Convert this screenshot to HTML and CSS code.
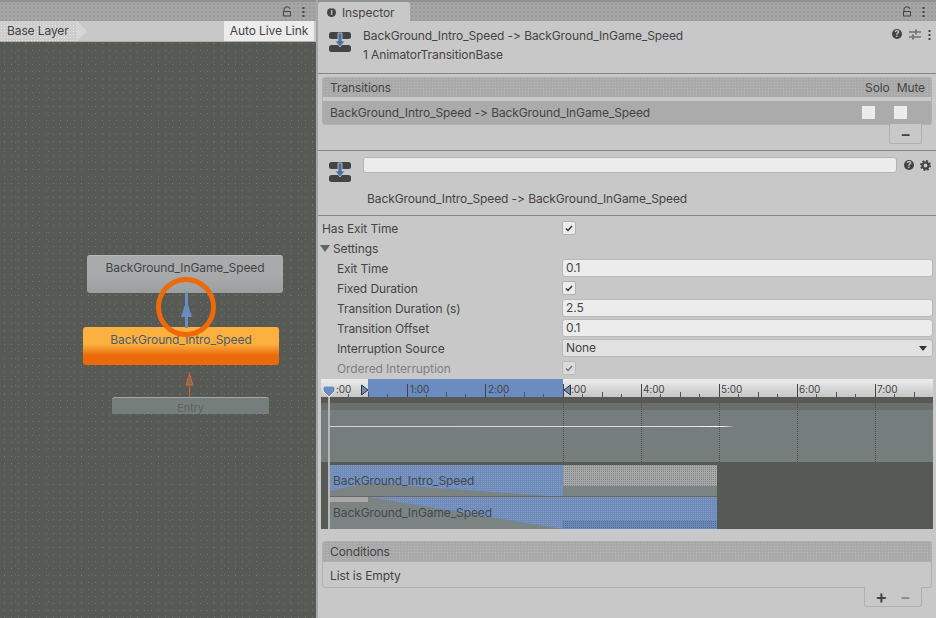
FILE: index.html
```html
<html>
  <head>
    <link rel="stylesheet" href="styles.css">
  </head>
  <body>
    <div class="graph-pane">
      <div class="tabstrip dotted">
        <svg class="lock" width="10" height="11" viewBox="0 0 10 11"><path d="M2 5V3a3 2.2 0 0 1 6 0M1.500 5.500h7v4.500h-7z" fill="none" stroke="#444" stroke-width="1"/></svg>
        <svg class="kebab" width="3" height="11" viewBox="0 0 3 11"><path d="M0.500 1h2v2h-2zM0.500 5h2v2h-2zM0.500 9h2v2h-2z" fill="#444"/></svg>
      </div>
      <div class="crumbs">
        <div class="crumb">Base Layer</div>
        <div class="crumb-tip"></div>
        <div class="crumb-fill"></div>
        <div class="live-link">Auto Live Link</div>
      </div>
      <div class="graph">
        <div class="node node-ingame">BackGround_InGame_Speed</div>
        <div class="node node-intro">BackGround_Intro_Speed</div>
        <div class="node node-entry">Entry</div>
        <svg class="graph-marks" width="316" height="577" viewBox="0 0 316 577">
          <path d="M186.500 250V286" stroke="#6a8cc0" stroke-width="3"/>
          <path d="M186.500 258L192 275H181Z" fill="#6a8cc0"/>
          <circle cx="186" cy="265" r="27.500" fill="none" stroke="#ec6a0a" stroke-width="5"/>
          <path d="M189.500 355V330" stroke="#e0622a"/>
          <path d="M189.500 332L193 343H186Z" fill="#8a6a58" stroke="#e0622a"/>
        </svg>
      </div>
    </div>

    <div class="inspector">
      <div class="tabstrip dotted">
        <div class="tab"><span class="info-icon">i</span>Inspector</div>
        <svg class="lock" width="10" height="11" viewBox="0 0 10 11"><path d="M2 5V3a3 2.2 0 0 1 6 0M1.500 5.500h7v4.500h-7z" fill="none" stroke="#444" stroke-width="1"/></svg>
        <svg class="kebab" width="3" height="11" viewBox="0 0 3 11"><path d="M0.500 1h2v2h-2zM0.500 5h2v2h-2zM0.500 9h2v2h-2z" fill="#444"/></svg>
      </div>

      <div class="asset-head">
        <svg class="transition-icon" width="22" height="22" viewBox="0 0 22 22">
          <rect x="0" y="1" width="22" height="7" rx="2.500" fill="#444"/>
          <rect x="0" y="14" width="22" height="7" rx="2.500" fill="#444"/>
          <path d="M9 2h4v8h3L11 16L6 10h3z" fill="#4d6f9f" stroke="#c8c8c8" stroke-width="0.800"/>
        </svg>
        <div class="asset-text">
          <div>BackGround_Intro_Speed -&gt; BackGround_InGame_Speed</div>
          <div>1 AnimatorTransitionBase</div>
        </div>
        <div class="head-icons">
          <span class="help-icon">?</span>
          <svg width="12" height="11" viewBox="0 0 12 11"><path d="M0 3h6M8 3h4M0 8h3M5 8h7M7 0.500v5M4 5.500v5" stroke="#444" stroke-width="1.200" fill="none"/></svg>
          <svg width="3" height="11" viewBox="0 0 3 11"><path d="M0.500 1h2v2h-2zM0.500 5h2v2h-2zM0.500 9h2v2h-2z" fill="#444"/></svg>
        </div>
      </div>

      <div class="list-box transitions">
        <div class="list-head dotted-dark">
          <span>Transitions</span>
          <span class="solo">Solo</span>
          <span>Mute</span>
        </div>
        <div class="list-row">
          <span>BackGround_Intro_Speed -&gt; BackGround_InGame_Speed</span>
          <i class="flag first"></i>
          <i class="flag"></i>
        </div>
      </div>
      <div class="list-foot-wrap">
        <div class="list-foot single"><span class="foot-btn">−</span></div>
      </div>

      <div class="transition-head">
        <svg class="transition-icon lower" width="22" height="22" viewBox="0 0 22 22">
          <rect x="0" y="1" width="22" height="7" rx="2.500" fill="#444"/>
          <rect x="0" y="14" width="22" height="7" rx="2.500" fill="#444"/>
          <path d="M9 2h4v8h3L11 16L6 10h3z" fill="#4d6f9f" stroke="#c8c8c8" stroke-width="0.800"/>
        </svg>
        <div class="transition-main">
          <div class="name-line">
            <div class="name-input"></div>
            <span class="help-icon">?</span>
            <svg width="11" height="11" viewBox="0 0 12 12"><circle cx="6" cy="6" r="3.300" fill="none" stroke="#444" stroke-width="2.400"/><circle cx="6" cy="6" r="5" fill="none" stroke="#444" stroke-width="2" stroke-dasharray="2 1.930"/></svg>
          </div>
          <div class="transition-name">BackGround_Intro_Speed -&gt; BackGround_InGame_Speed</div>
        </div>
      </div>

      <div class="props">
        <div class="prop"><label>Has Exit Time</label><div class="check"><svg width="8" height="7" viewBox="0 0 8 7"><path d="M1 3.500L3 5.500L7 1" fill="none" stroke="#333" stroke-width="1.500"/></svg></div></div>
        <div class="prop foldout"><label><span class="arrow"></span>Settings</label></div>
        <div class="prop nested"><label>Exit Time</label><div class="field">0.1</div></div>
        <div class="prop nested"><label>Fixed Duration</label><div class="check"><svg width="8" height="7" viewBox="0 0 8 7"><path d="M1 3.500L3 5.500L7 1" fill="none" stroke="#333" stroke-width="1.500"/></svg></div></div>
        <div class="prop nested"><label>Transition Duration (s)</label><div class="field">2.5</div></div>
        <div class="prop nested"><label>Transition Offset</label><div class="field">0.1</div></div>
        <div class="prop nested"><label>Interruption Source</label><div class="field select">None<span class="caret"></span></div></div>
        <div class="prop nested disabled"><label>Ordered Interruption</label><div class="check"><svg width="8" height="7" viewBox="0 0 8 7"><path d="M1 3.500L3 5.500L7 1" fill="none" stroke="#333" stroke-width="1.500"/></svg></div></div>
      </div>

      <div class="timeline">
        <div class="ruler">
          <div class="ruler-blue"></div>
          <svg class="ticks" width="612" height="18" viewBox="0 0 612 18">
            <path d="M86.500 5V18M164.500 5V18M242.500 5V18M320.500 5V18M398.500 5V18M476.500 5V18M554.500 5V18" stroke="#444"/>
            <path d="M47.500 13V18M125.500 13V18M203.500 13V18M281.500 13V18M359.500 13V18M437.500 13V18M515.500 13V18M593.500 13V18M27.500 15V18M66.500 15V18M105.500 15V18M144.500 15V18M183.500 15V18M222.500 15V18M261.500 15V18M300.500 15V18M339.500 15V18M378.500 15V18M417.500 15V18M456.500 15V18M495.500 15V18M534.500 15V18M573.500 15V18" stroke="#555"/>
            <path d="M40.500 6V16L47 11Z M249.500 6V16L243 11Z" fill="#6a8cc0" stroke="#333"/>
          </svg>
          <span class="time t0">:00</span>
          <span class="time t1">1:00</span>
          <span class="time t2">2:00</span>
          <span class="time t3">:00</span>
          <span class="time t4">4:00</span>
          <span class="time t5">5:00</span>
          <span class="time t6">6:00</span>
          <span class="time t7">7:00</span>
          <svg class="playhead" width="14" height="13" viewBox="0 0 14 13"><path d="M1 3Q1 1 3 1H11Q13 1 13 3V6L7 12L1 6Z" fill="#6a8cc0" stroke="#e8e8e8"/></svg>
        </div>
        <div class="track">
          <div class="track-band"></div>
          <div class="track-blue"></div>
          <div class="track-curve"></div>
          <svg class="track-lines" width="612" height="59" viewBox="0 0 612 59">
            <path d="M242.500 0V59M320.500 0V59M398.500 0V59M476.500 0V59M554.500 0V59" stroke="#4a4d4d" stroke-dasharray="1 1"/>
          </svg>
        </div>
        <div class="track-gap"></div>
        <div class="clips">
          <svg class="clip-art" width="388" height="64" viewBox="0 0 388 64">
            <defs>
              <pattern id="blueDither" width="2" height="2" patternUnits="userSpaceOnUse">
                <rect width="2" height="2" fill="#6a8cc4"/>
                <rect width="1" height="1" fill="#8f98a4"/>
              </pattern>
              <pattern id="grayDither" width="2" height="2" patternUnits="userSpaceOnUse">
                <rect width="2" height="2" fill="#a8a8a8"/>
                <rect width="1" height="1" fill="#7d8484"/>
              </pattern>
              <pattern id="darkDither" width="2" height="2" patternUnits="userSpaceOnUse">
                <rect width="2" height="2" fill="#6a8cc4"/>
                <rect width="1" height="1" fill="#5e6468"/>
              </pattern>
            </defs>
            <rect width="388" height="64" fill="#7b8383"/>
            <rect x="234" y="0" width="154" height="21" fill="url(#grayDither)"/>
            <path d="M0 0H234V32L39 18L0 26Z" fill="url(#blueDither)"/>
            <rect x="0" y="32" width="39" height="5" fill="#a8a8a8"/>
            <path d="M39 32H234V64Z" fill="url(#blueDither)"/>
            <rect x="234" y="32" width="154" height="32" fill="url(#blueDither)"/>
            <rect x="234" y="55" width="154" height="9" fill="url(#darkDither)"/>
            <path d="M0 31.500H388" stroke="#666" stroke-width="1"/>
          </svg>
          <span class="clip-label first-clip">BackGround_Intro_Speed</span>
          <span class="clip-label second-clip">BackGround_InGame_Speed</span>
        </div>
        <div class="playhead-line"></div>
      </div>

      <div class="list-box conditions">
        <div class="list-head dotted-dark"><span>Conditions</span></div>
        <div class="list-empty">List is Empty</div>
      </div>
      <div class="list-foot-wrap">
        <div class="list-foot double"><span class="foot-btn plus">+</span><span class="foot-btn minus">−</span></div>
      </div>
    </div>
  </body>
</html>
```

FILE: styles.css
```css
body {
  margin: 0;
  width: 936px;
  height: 618px;
  overflow: hidden;
  display: flex;
  gap: 2px;
  background: #a6a6a6;
  color: #444;
  font-family: Inter, "Liberation Sans", sans-serif;
  font-size: 12px;
  letter-spacing: -0.1px;
  font-variant-ligatures: none;
  font-feature-settings: "calt" 0;
}
.graph-pane {
  width: 316px;
  display: flex;
  flex-direction: column;
}
.inspector {
  width: 618px;
  background: #c8c8c8;
  display: flex;
  flex-direction: column;
}
.tabstrip {
  height: 21px;
  flex: none;
  display: flex;
  align-items: center;
  justify-content: flex-end;
  gap: 10px;
  padding-right: 11px;
  box-sizing: border-box;
  background-color: #a6a6a6;
  border-top: 2px solid #8e9492;
}
.dotted {
  background-image: radial-gradient(circle, #8a8a8a 0.6px, transparent 0.8px);
  background-size: 4px 4px;
}
.dotted-dark {
  background-color: #a9a9a9;
  background-image: radial-gradient(circle, #b9b9b9 0.8px, transparent 1px);
  background-size: 3px 3px;
}
.crumbs {
  height: 20px;
  display: flex;
  background: #c8c8c8;
  border-bottom: 1px solid #b0b0b0;
  box-sizing: content-box;
}
.crumb {
  padding: 0 0 0 7px;
  width: 70px;
  line-height: 20px;
  background-color: #cdcdcd;
  background-image: radial-gradient(circle, #e6e6e6 0.6px, transparent 0.8px);
  background-size: 3px 3px;
}
.crumb-tip {
  width: 10px;
  background: #d6d6d6;
  clip-path: polygon(0 0, 100% 50%, 0 100%);
}
.crumb-fill { flex: 1; }
.live-link {
  width: 90px;
  text-align: center;
  background: #ececec;
  line-height: 20px;
  margin-right: 2px;
}
.graph {
  flex: 1;
  position: relative;
  background-color: #575955;
  background-image:
    radial-gradient(circle, #727472 0.6px, transparent 0.8px),
    radial-gradient(circle, #6a6c69 0.6px, transparent 0.8px);
  background-size: 7px 7px, 11px 9px;
  background-position: 8px 12px, 10px 15px;
}
.node {
  position: absolute;
  width: 196px;
  height: 38px;
  box-sizing: border-box;
  padding-top: 5px;
  text-align: center;
  border-radius: 3px;
  line-height: 16px;
}
.node-ingame {
  left: 87px;
  top: 213px;
  padding-top: 4px;
  background: linear-gradient(#a8aaac, #a8aaac 50%, #9c9f9f);
  border-top: 1px solid #b8b8b8;
}
.node-intro {
  left: 83px;
  top: 285px;
  background: linear-gradient(#fbb040, #fbb040 45%, #ec6a0a 75%);
  color: #4a5a70;
}
.node-entry {
  left: 112px;
  top: 355px;
  width: 157px;
  height: 17px;
  border-radius: 3px 3px 0 0;
  background: #757d7d;
  border-top: 1px solid #a5a8a8;
  padding-top: 3px;
  line-height: 15px;
  font-size: 11px;
  color: #5f6363;
}
.graph-marks {
  position: absolute;
  left: 0;
  top: 0;
}
.tab {
  margin-right: auto;
  height: 19px;
  width: 92px;
  box-sizing: border-box;
  padding: 1px 0 0 9px;
  display: flex;
  align-items: center;
  gap: 6px;
  background: #c8c8c8;
  border-radius: 3px 3px 0 0;
}
.info-icon {
  width: 9px;
  height: 9px;
  border-radius: 50%;
  background: #444;
  color: #c8c8c8;
  font-size: 8px;
  font-weight: 700;
  line-height: 9px;
  text-align: center;
}
.asset-head {
  flex: none;
  display: flex;
  border-bottom: 1px solid #7f8985;
  padding: 5px 5px 0 11px;
  box-sizing: content-box;
  height: 47px;
}
.transition-icon { flex: none; margin-top: 5px; }
.transition-icon.lower { margin-top: 4px; }
.asset-text {
  margin-left: 12px;
  flex: 1;
  line-height: 19px;
}
.head-icons {
  display: flex;
  gap: 7px;
  align-items: center;
  height: 12px;
  margin-top: 2px;
}
.help-icon {
  width: 10px;
  height: 10px;
  border-radius: 50%;
  background: #444;
  color: #c8c8c8;
  font-size: 9px;
  font-weight: 700;
  line-height: 10px;
  text-align: center;
}
.list-box {
  margin: 3px 4px 0;
  border: 1px solid #b0b0b0;
  border-radius: 3px;
  flex: none;
}
.list-head {
  height: 19px;
  display: flex;
  align-items: center;
  padding: 0 6px 0 7px;
}
.solo { margin-left: auto; margin-right: 7px; }
.list-row {
  margin-top: 4px;
  height: 23px;
  background: #ababab;
  display: flex;
  align-items: center;
  padding-left: 7px;
}
.flag {
  width: 13px;
  height: 13px;
  background: #ececec;
  margin-right: 19px;
}
.flag.first { margin-left: auto; }
.flag:last-child { margin-right: 24px; }
.list-foot-wrap {
  display: flex;
  justify-content: flex-end;
  padding-right: 14px;
  flex: none;
}
.list-foot {
  margin-top: -1px;
  background: #c8c8c8;
  border: 1px solid #b0b0b0;
  border-top: none;
  border-radius: 0 0 3px 3px;
  display: flex;
  align-items: center;
  justify-content: space-around;
  font-size: 16px;
  color: #444;
  box-sizing: border-box;
}
.list-foot.single { width: 33px; height: 20px; }
.list-foot.double { width: 58px; height: 20px; padding: 0 4px; }
.foot-btn { line-height: 20px; font-weight: 600; }
.foot-btn.plus { font-size: 18px; }
.foot-btn.minus { color: #8a8a8a; }
.transition-head {
  flex: none;
  height: 58px;
  margin-top: 6px;
  display: flex;
  border-top: 1px solid #7f8985;
  border-bottom: 1px solid #7f8985;
  padding: 6px 5px 0 11px;
  box-sizing: content-box;
}
.transition-main {
  flex: 1;
  margin-left: 12px;
}
.name-line {
  display: flex;
  align-items: center;
  gap: 7px;
}
.name-input {
  flex: 1;
  height: 14px;
  background: #ececec;
  border: 1px solid #b4b4b4;
  border-radius: 3px;
}
.name-line .help-icon { margin-right: -1px; }
.transition-name {
  margin: 18px 0 0 4px;
}
.props {
  flex: none;
  padding: 2px 3px 0 4px;
  box-sizing: content-box;
  height: 161px;
}
.prop {
  display: flex;
  align-items: center;
  height: 20px;
}
.prop label {
  width: 240px;
  flex: none;
  display: flex;
  align-items: center;
}
.prop.nested label { padding-left: 15px; box-sizing: border-box; }
.prop.disabled { opacity: 0.55; }
.arrow {
  width: 0;
  height: 0;
  margin: 0 3px 0 -2px;
  border-left: 5px solid transparent;
  border-right: 5px solid transparent;
  border-top: 7px solid #5f6462;
}
.check {
  width: 12px;
  height: 12px;
  background: #ececec;
  border: 1px solid #b0b0b0;
  border-radius: 2px;
  display: flex;
  align-items: center;
  justify-content: center;
}
.field {
  flex: 1;
  height: 16px;
  line-height: 16px;
  padding-left: 3px;
  background: #ececec;
  border: 1px solid #b8b8b8;
  border-radius: 3px;
  position: relative;
}
.select { background: #e2e2e2; }
.caret {
  position: absolute;
  right: 5px;
  top: 6px;
  border-left: 4px solid transparent;
  border-right: 4px solid transparent;
  border-top: 5px solid #333;
}
.timeline {
  flex: none;
  margin: 0 3px 0 3px;
  width: 612px;
  position: relative;
}
.ruler {
  height: 18px;
  position: relative;
  background: linear-gradient(#ececec, #c6c6c6);
}
.ruler-blue {
  position: absolute;
  left: 47px;
  width: 195px;
  top: 0;
  bottom: 0;
  background: #6a8cc0;
}
.ticks, .playhead {
  position: absolute;
  top: 0;
  left: 0;
}
.playhead { left: 1px; top: 6px; }
.time {
  position: absolute;
  top: 2px;
  font-size: 10px;
  line-height: 16px;
}
.t0 { left: 15px; }
.t1 { left: 89px; }
.t2 { left: 167px; }
.t3 { left: 250px; }
.t4 { left: 322px; }
.t5 { left: 400px; }
.t6 { left: 478px; }
.t7 { left: 556px; }
.track {
  position: relative;
  background: #757d7d;
  border-top: 6px solid #575955;
  box-sizing: content-box;
  height: 59px;
}
.track-band {
  height: 7px;
  background-color: #868989;
  background-image: radial-gradient(circle, #6a6d6c 0.7px, transparent 0.9px);
  background-size: 2px 2px;
}
.track-blue {
  position: absolute;
  left: 47px;
  width: 195px;
  top: 13px;
  bottom: 0;
  background-image: radial-gradient(circle, #6a8cc0 0.5px, transparent 0.7px);
  background-size: 4px 4px;
}
.track-curve {
  position: absolute;
  left: 8px;
  width: 404px;
  top: 23px;
  height: 1px;
  background: linear-gradient(to right, #d0d4d4, #dde0e0 90%, #fff 97%, #8a9090);
}
.track-lines {
  position: absolute;
  left: 0;
  top: 0;
}
.track-gap {
  height: 3px;
  background: #575955;
}
.clips {
  height: 64px;
  background: #575955;
  position: relative;
}
.clip-art {
  position: absolute;
  left: 8px;
  top: 0;
}
.clip-label {
  position: absolute;
  left: 12px;
  color: #454a4a;
}
.first-clip { top: 8px; }
.second-clip { top: 40px; }
.playhead-line {
  position: absolute;
  left: 7px;
  top: 18px;
  bottom: 0;
  width: 2px;
  background: #b4b8b8;
}
.conditions { margin-top: 12px; }
.list-empty {
  height: 25px;
  line-height: 27px;
  padding-left: 7px;
  border-top: 1px solid #b0b0b0;
}
```
